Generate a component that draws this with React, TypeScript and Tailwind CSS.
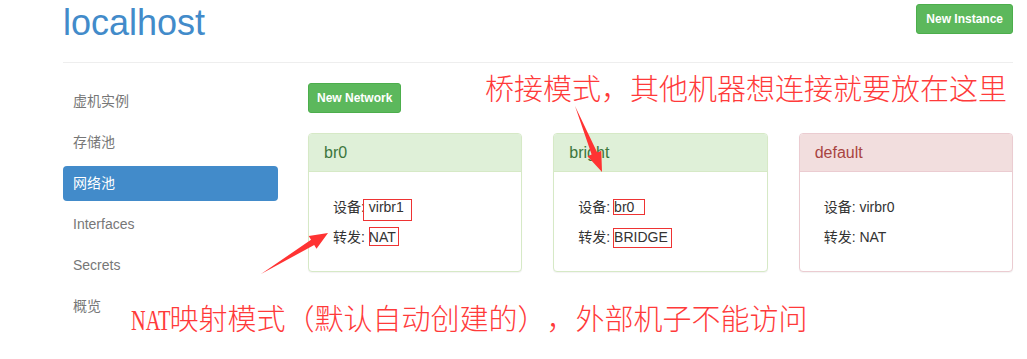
const sideItems = ['虚机实例', '存储池', '网络池', 'Interfaces', 'Secrets', '概览']

type Net = {
  name: string
  dev: string
  fwd: string
  tone: 'ok' | 'bad'
  devMark?: string
  fwdMark?: string
}

// red marks drawn over the screenshot, sized around the value they point at
const networks: Net[] = [
  {
    name: 'br0', dev: 'virbr1', fwd: 'NAT', tone: 'ok',
    devMark: '-left-[6px] -right-[8px] top-0 -bottom-[6px]',
    fwdMark: 'left-0 -right-[3px] -top-[2px] -bottom-[1px]',
  },
  {
    name: 'bright', dev: 'br0', fwd: 'BRIDGE', tone: 'ok',
    devMark: '-left-[1px] -right-[11px] top-0 bottom-0',
    fwdMark: '-left-[1px] -right-[4px] -top-[1px] -bottom-[3px]',
  },
  { name: 'default', dev: 'virbr0', fwd: 'NAT', tone: 'bad' },
]

const font = { fontFamily: '"Liberation Sans", "Noto Sans CJK SC", sans-serif' }
const noteFont = { fontFamily: '"Liberation Serif", "Noto Sans CJK SC", serif' }

function Value({ text, mark }: { text: string; mark?: string }) {
  return (
    <span className="relative">
      {text}
      {mark && <span className={`absolute border border-[#e33] ${mark}`} />}
    </span>
  )
}

function NetCard({ net }: { net: Net }) {
  const ok = net.tone === 'ok'
  return (
    <div
      className={`rounded-[4px] border bg-white shadow-[0_1px_1px_rgba(0,0,0,0.05)] ${ok ? 'border-[#d6e9c6]' : 'border-[#ebccd1]'}`}
    >
      <div
        className={`h-[38px] px-[15px] flex items-center border-b rounded-t-[3px] text-[16px] ${
          ok ? 'bg-[#dff0d8] border-[#d6e9c6] text-[#3c763d]' : 'bg-[#f2dede] border-[#ebccd1] text-[#a94442]'
        }`}
      >
        {net.name}
      </div>
      <div className="pl-[24px] pt-[20px] pb-[19px] text-[14px] text-[#333]">
        <div className="h-[30px] leading-[30px]">
          设备: <Value text={net.dev} mark={net.devMark} />
        </div>
        <div className="h-[30px] leading-[30px]">
          转发: <Value text={net.fwd} mark={net.fwdMark} />
        </div>
      </div>
    </div>
  )
}

function Arrows() {
  return (
    <svg className="absolute left-0 top-0 pointer-events-none" width="1027" height="359">
      {/* bridge arrow */}
      <polygon
        points="575,106 591.6,154.6 587.5,156.3 602,172 601.3,150.7 597.2,152.4"
        fill="#f33"
      />
      {/* NAT arrow */}
      <polygon
        points="261,274 314.2,245 316.5,248.8 328,233 308.7,236 311,239.8"
        fill="#f33"
      />
    </svg>
  )
}

export default function App() {
  return (
    <div className="relative w-[1027px] h-[359px] overflow-hidden bg-white" style={font}>
      <div className="ml-[63px] w-[950px]">
        {/* header */}
        <div className="h-[63px] border-b border-[#eee] flex justify-between items-start">
          <h1 className="pt-[3px] text-[36px] leading-[40px] text-[#428bca]">localhost</h1>
          <button className="mt-[4px] h-[30px] px-[9px] rounded-[3px] bg-[#5cb85c] border border-[#4cae4c] text-white text-[12px] font-bold">
            New Instance
          </button>
        </div>

        <div className="pt-[20px] flex gap-[30px]">
          {/* sidebar */}
          <div className="w-[215px] pt-[1px] flex flex-col gap-[6px] text-[14px]">
            {sideItems.map((s) => (
              <div
                key={s}
                className={`h-[35px] px-[10px] flex items-center rounded-[4px] ${
                  s === '网络池' ? 'bg-[#428bca] text-white' : 'text-[#777]'
                }`}
              >
                {s}
              </div>
            ))}
          </div>

          {/* main */}
          <div className="w-[705px]">
            <button className="h-[30px] px-[8px] rounded-[3px] bg-[#5cb85c] border border-[#4cae4c] text-white text-[12px] font-bold">
              New Network
            </button>
            <div className="mt-[20px] grid grid-cols-3 gap-[31px]">
              {networks.map((n) => (
                <NetCard key={n.name} net={n} />
              ))}
            </div>
          </div>
        </div>
      </div>

      {/* annotations drawn over the page */}
      <div
        className="absolute left-[485px] top-[75px] text-[29px] leading-[30px] font-light text-[#ff3a3a] whitespace-nowrap [text-spacing-trim:space-all]"
        style={noteFont}
      >
        桥接模式，其他机器想连接就要放在这里
      </div>
      <div
        className="absolute left-[131px] top-[305px] text-[29px] leading-[30px] font-light text-[#ff3a3a] whitespace-nowrap [text-spacing-trim:space-all]"
        style={noteFont}
      >
        <span className="inline-block font-normal origin-left scale-x-[0.7] -mr-[18px]">NAT</span>
        映射模式（默认自动创建的），外部机子不能访问
      </div>

      <Arrows />
    </div>
  )
}
